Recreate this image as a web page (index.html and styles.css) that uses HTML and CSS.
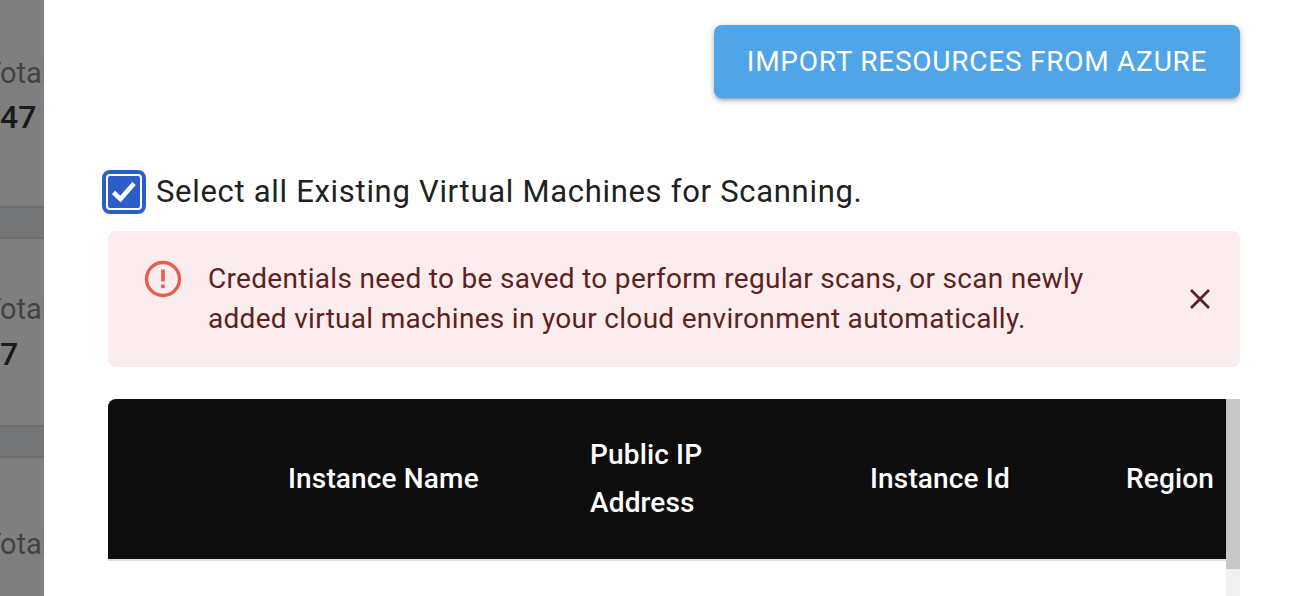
FILE: index.html
```html
<!DOCTYPE html>
<html lang="en">
<head>
  <meta charset="UTF-8" />
  <title>Import Resources</title>
  <link rel="stylesheet" href="styles.css">
</head>
<body>
  <div class="page">
    <aside class="backdrop">
      <div class="stat stat-first">
        <div class="stat-label">Total</div>
        <div class="stat-value value-47">47</div>
      </div>
      <div class="band"></div>
      <div class="stat">
        <div class="stat-label">Total</div>
        <div class="stat-value value-7">7</div>
      </div>
      <div class="band"></div>
      <div class="stat stat-last">
        <div class="stat-label">Total</div>
      </div>
    </aside>

    <main class="drawer">
      <div class="actions">
        <button class="import-btn">IMPORT RESOURCES FROM AZURE</button>
      </div>

      <label class="select-all">
        <span class="checkbox">
          <svg viewBox="0 0 24 24" width="24" height="24">
            <path d="M1.5 12.5 8.5 19 22 3.5" fill="none" stroke="#fff" stroke-width="4.6"/>
          </svg>
        </span>
        <span class="select-text">Select all Existing Virtual Machines for Scanning.</span>
      </label>

      <div class="alert">
        <svg class="alert-icon" viewBox="0 0 38 38" width="38" height="38">
          <circle cx="19" cy="19" r="16.5" fill="none" stroke="#e55f4f" stroke-width="3.4"/>
          <rect x="17.2" y="9.5" width="3.6" height="12" fill="#e55f4f"/>
          <rect x="17.2" y="24.5" width="3.6" height="3.6" fill="#e55f4f"/>
        </svg>
        <div class="alert-text">Credentials need to be saved to perform regular scans, or scan newly added virtual machines in your cloud environment automatically.</div>
        <svg class="alert-close" viewBox="0 0 20 20" width="20" height="20">
          <path d="M1 1 19 19M19 1 1 19" fill="none" stroke="#5f2120" stroke-width="2.8"/>
        </svg>
      </div>

      <div class="table-wrap">
        <table class="resources">
          <thead>
            <tr>
              <th class="col-check"></th>
              <th class="col-name">Instance Name</th>
              <th class="col-ip">Public IP<br>Address</th>
              <th class="col-id">Instance Id</th>
              <th class="col-region">Region</th>
            </tr>
          </thead>
        </table>
        <div class="scrollbar">
          <div class="scrollbar-thumb"></div>
        </div>
      </div>
    </main>
  </div>
</body>
</html>
```

FILE: styles.css
```css
html, body {
  margin: 0;
  height: 100%;
  overflow: hidden;
}

body {
  font-family: Roboto, "Liberation Sans", sans-serif;
  background-color: #fff;
}

.page {
  display: flex;
  height: 596px;
}

.backdrop {
  flex: 0 0 44px;
  width: 44px;
  overflow: hidden;
  background-color: #7f7f7f;
}

.stat {
  height: 186px;
  padding-top: 53px;
  box-sizing: border-box;
  white-space: nowrap;
}

.stat-first {
  height: 206px;
  padding-top: 56px;
}

.stat-last {
  padding-top: 69px;
}

.stat-label {
  margin-left: -16px;
  font-size: 29px;
  line-height: 34px;
  color: #434343;
}

.stat-value {
  margin-top: 10px;
  font-size: 32px;
  line-height: 36px;
  font-weight: 500;
  color: #1a1a1a;
}

.value-47 {
  margin-top: 9px;
}

.band {
  height: 29px;
  background-color: #757678;
  border-top: 2px solid #6e6e6e;
  border-bottom: 2px solid #6e6e6e;
}

.drawer {
  flex: 1;
  min-width: 0;
  padding: 25px 55px 0 64px;
  background-color: #fff;
}

.actions {
  display: flex;
  justify-content: flex-end;
}

.import-btn {
  width: 526px;
  height: 73px;
  border: none;
  border-radius: 8px;
  background-color: #50a4e8;
  color: #fff;
  font-family: inherit;
  font-size: 28px;
  letter-spacing: 0.75px;
  box-shadow: 0 3px 3px -2px rgba(0, 0, 0, 0.2), 0 3px 5px rgba(0, 0, 0, 0.2), 0 1px 8px rgba(0, 0, 0, 0.12);
}

.select-all {
  display: flex;
  align-items: center;
  gap: 10px;
  margin: 71px 0 17px -6px;
  font-size: 31px;
  letter-spacing: 0.7px;
  line-height: 44px;
  color: #212121;
}

.select-text {
  padding-top: 1px;
}

.checkbox {
  display: flex;
  align-items: center;
  justify-content: center;
  width: 32px;
  height: 32px;
  background-color: #2b5fc7;
  border: 2px solid #fff;
  border-radius: 4px;
  outline: 4px solid #2b5fc7;
  outline-offset: 0;
  margin: 4px;
}

.alert {
  display: flex;
  align-items: flex-start;
  height: 136px;
  box-sizing: border-box;
  padding: 29px 30px 0 36px;
  background-color: #fbeded;
  border-radius: 8px;
  color: #5f2120;
}

.alert-icon {
  flex: none;
}

.alert-text {
  width: 900px;
  margin: -1px 0 0 26px;
  font-size: 28px;
  line-height: 40px;
  letter-spacing: 0.3px;
}

.alert-close {
  flex: none;
  margin: 29px 0 0 auto;
}

.table-wrap {
  display: flex;
  margin-top: 32px;
}

.resources {
  width: 1118px;
  flex: none;
  height: 162px;
  table-layout: fixed;
  border-collapse: collapse;
  background-color: #0d0d0d;
  border-top-left-radius: 8px;
  border-bottom: 2px solid #e0e0e0;
  color: #fff;
}

.resources th {
  padding: 0 16px;
  text-align: left;
  font-size: 28px;
  letter-spacing: 0.15px;
  font-weight: 500;
  line-height: 48px;
}

.col-check { width: 132px; }
.col-name { width: 270px; }
.col-ip { width: 248px; }
.col-id { width: 224px; }

.scrollbar {
  flex: 0 0 14px;
  height: 197px;
  background-color: #f0f0f0;
}

.scrollbar-thumb {
  height: 170px;
  background-color: #c8c8c8;
}
```
